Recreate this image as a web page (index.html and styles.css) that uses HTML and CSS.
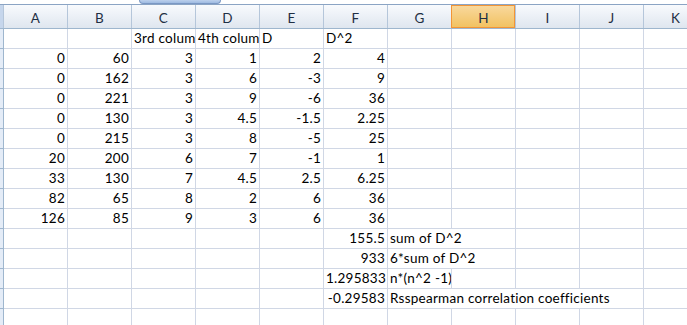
FILE: index.html
```html
<!DOCTYPE html>
<html lang="en">
<head>
    <meta charset="UTF-8">
    <meta name="viewport" content="width=device-width, initial-scale=1.0">
    <title>Spearman</title>
    <link rel="stylesheet" href="styles.css">
</head>
<body>
    <div class="topbar"><div class="thumb"></div></div>
    <div class="colhead">
        <div class="corner"></div>
        <div class="h">A</div>
        <div class="h">B</div>
        <div class="h">C</div>
        <div class="h">D</div>
        <div class="h">E</div>
        <div class="h">F</div>
        <div class="h">G</div>
        <div class="h sel">H</div>
        <div class="h">I</div>
        <div class="h">J</div>
        <div class="h">K</div>
    </div>
    <main class="sheet">
        <div class="rowheads"></div>
        <div class="grid">
            <div class="row">
                <div class="c"></div><div class="c"></div><div class="c">3rd colum</div><div class="c">4th colum</div><div class="c">D</div><div class="c">D^2</div><div class="c"></div><div class="c"></div><div class="c"></div><div class="c"></div><div class="c"></div>
            </div>
            <div class="row">
                <div class="c n">0</div><div class="c n">60</div><div class="c n">3</div><div class="c n">1</div><div class="c n">2</div><div class="c n">4</div><div class="c"></div><div class="c"></div><div class="c"></div><div class="c"></div><div class="c"></div>
            </div>
            <div class="row">
                <div class="c n">0</div><div class="c n">162</div><div class="c n">3</div><div class="c n">6</div><div class="c n">-3</div><div class="c n">9</div><div class="c"></div><div class="c"></div><div class="c"></div><div class="c"></div><div class="c"></div>
            </div>
            <div class="row">
                <div class="c n">0</div><div class="c n">221</div><div class="c n">3</div><div class="c n">9</div><div class="c n">-6</div><div class="c n">36</div><div class="c"></div><div class="c"></div><div class="c"></div><div class="c"></div><div class="c"></div>
            </div>
            <div class="row">
                <div class="c n">0</div><div class="c n">130</div><div class="c n">3</div><div class="c n">4.5</div><div class="c n">-1.5</div><div class="c n">2.25</div><div class="c"></div><div class="c"></div><div class="c"></div><div class="c"></div><div class="c"></div>
            </div>
            <div class="row">
                <div class="c n">0</div><div class="c n">215</div><div class="c n">3</div><div class="c n">8</div><div class="c n">-5</div><div class="c n">25</div><div class="c"></div><div class="c"></div><div class="c"></div><div class="c"></div><div class="c"></div>
            </div>
            <div class="row">
                <div class="c n">20</div><div class="c n">200</div><div class="c n">6</div><div class="c n">7</div><div class="c n">-1</div><div class="c n">1</div><div class="c"></div><div class="c"></div><div class="c"></div><div class="c"></div><div class="c"></div>
            </div>
            <div class="row">
                <div class="c n">33</div><div class="c n">130</div><div class="c n">7</div><div class="c n">4.5</div><div class="c n">2.5</div><div class="c n">6.25</div><div class="c"></div><div class="c"></div><div class="c"></div><div class="c"></div><div class="c"></div>
            </div>
            <div class="row">
                <div class="c n">82</div><div class="c n">65</div><div class="c n">8</div><div class="c n">2</div><div class="c n">6</div><div class="c n">36</div><div class="c"></div><div class="c"></div><div class="c"></div><div class="c"></div><div class="c"></div>
            </div>
            <div class="row">
                <div class="c n">126</div><div class="c n">85</div><div class="c n">9</div><div class="c n">3</div><div class="c n">6</div><div class="c n">36</div><div class="c"></div><div class="c"></div><div class="c"></div><div class="c"></div><div class="c"></div>
            </div>
            <div class="row">
                <div class="c"></div><div class="c"></div><div class="c"></div><div class="c"></div><div class="c"></div><div class="c n">155.5</div><div class="c span2">sum of D^2</div><div class="c"></div><div class="c"></div><div class="c"></div>
            </div>
            <div class="row">
                <div class="c"></div><div class="c"></div><div class="c"></div><div class="c"></div><div class="c"></div><div class="c n">933</div><div class="c span2">6*sum of D^2</div><div class="c"></div><div class="c"></div><div class="c"></div>
            </div>
            <div class="row">
                <div class="c"></div><div class="c"></div><div class="c"></div><div class="c"></div><div class="c"></div><div class="c n">1.295833</div><div class="c">n*(n^2 -1)</div><div class="c"></div><div class="c"></div><div class="c"></div><div class="c"></div>
            </div>
            <div class="row">
                <div class="c"></div><div class="c"></div><div class="c"></div><div class="c"></div><div class="c"></div><div class="c n">-0.29583</div><div class="c span4">Rsspearman correlation coefficients</div><div class="c"></div>
            </div>
            <div class="row">
                <div class="c"></div><div class="c"></div><div class="c"></div><div class="c"></div><div class="c"></div><div class="c"></div><div class="c"></div><div class="c"></div><div class="c"></div><div class="c"></div><div class="c"></div>
            </div>
        </div>
    </main>
</body>
</html>
```

FILE: styles.css
```css
body{
    margin: 0;
    overflow: hidden;
    background-color: #fff;
    font-family: Lato, "Liberation Sans", sans-serif;
    font-size: 13.5px;
    letter-spacing: 0.25px;
    width: 687px;
    height: 325px;
}
.topbar{
    height: 4px;
    border-bottom: 1px solid #8ba4c4;
    background-color: #fff;
}
.thumb{
    margin-left: 139px;
    width: 82px;
    height: 4px;
    box-sizing: border-box;
    background: linear-gradient(#bcd0ec, #9fbbe2);
    border: 1px solid #7b98c4;
    border-top: none;
    border-bottom-left-radius: 6px;
    border-bottom-right-radius: 6px;
}
.colhead{
    display: grid;
    grid-template-columns: 3px repeat(11, 63px);
    column-gap: 1px;
    height: 23px;
    background-color: #b5c6da;
    border-bottom: 1px solid #9eb6ce;
}
.corner{
    background-color: #c6d6ec;
}
.h{
    background: linear-gradient(#f8fafd, #dfe6ef);
    text-align: center;
    color: #1f2f44;
    padding-top: 4px;
    line-height: 18px;
}
.h.sel{
    background: linear-gradient(#f9d99f, #f1c15f);
    box-shadow: inset 0 0 0 1px #f29536;
    margin-left: -1px;
    padding-left: 1px;
}
.sheet{
    display: flex;
}
.rowheads{
    width: 3px;
    flex: none;
    border-right: 1px solid #9eb6ce;
    background: repeating-linear-gradient(#e4ecf7 0 19px, #9eb6ce 19px 20px);
    height: 300px;
}
.grid{
    display: flex;
    flex-direction: column;
    gap: 1px;
    background-color: #d0d7e5;
}
.row{
    display: grid;
    grid-template-columns: repeat(11, 63px);
    column-gap: 1px;
    height: 19px;
}
.c{
    background-color: #fff;
    padding: 0 2px;
    line-height: 19px;
    white-space: nowrap;
    overflow: hidden;
    color: #000;
}
.n{
    text-align: right;
}
.span2{
    grid-column: span 2;
}
.span4{
    grid-column: span 4;
}
```
